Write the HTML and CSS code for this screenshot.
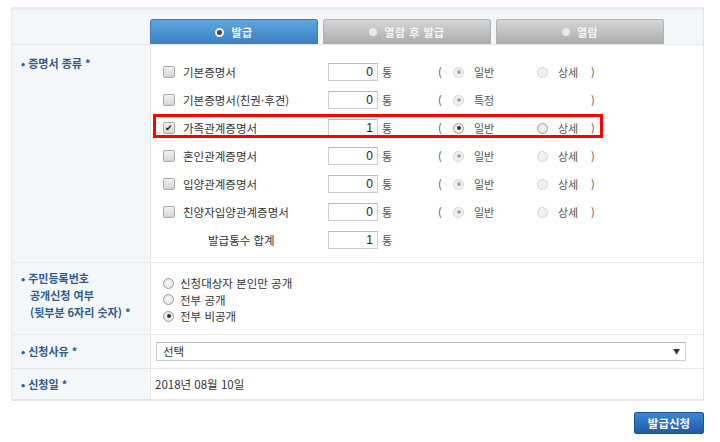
FILE: index.html
```html
<!DOCTYPE html>
<html lang="ko">
<head>
  <meta charset="UTF-8">
  <title>증명서 발급신청</title>
  <link rel="stylesheet" href="styles.css">
</head>
<body>
  <div class="form-box">
    <div class="tab-row">
      <div class="tab active"><span class="tab-dot"></span>발급</div>
      <div class="tab"><span class="tab-dot"></span>열람 후 발급</div>
      <div class="tab"><span class="tab-dot"></span>열람</div>
    </div>

    <!-- 증명서 종류 -->
    <div class="row row-certs">
      <div class="label top">• 증명서 종류 *</div>
      <div class="content certs">
        <div class="cert">
          <div class="cert-name"><span class="check"></span>기본증명서</div>
          <span class="count">0</span><span class="unit">통</span>
          <span class="paren">(</span>
          <span class="opt o1"><span class="radio dis on"></span>일반</span>
          <span class="opt o2"><span class="radio dis"></span>상세</span>
          <span class="paren">)</span>
        </div>
        <div class="cert">
          <div class="cert-name"><span class="check"></span>기본증명서(친권·후견)</div>
          <span class="count">0</span><span class="unit">통</span>
          <span class="paren">(</span>
          <span class="opt o1"><span class="radio dis on"></span>특정</span>
          <span class="opt o2"></span>
          <span class="paren">)</span>
        </div>
        <div class="cert picked">
          <div class="cert-name"><span class="check on">&#10004;</span>가족관계증명서</div>
          <span class="count">1</span><span class="unit">통</span>
          <span class="paren">(</span>
          <span class="opt o1"><span class="radio on"></span>일반</span>
          <span class="opt o2"><span class="radio"></span>상세</span>
          <span class="paren">)</span>
        </div>
        <div class="cert">
          <div class="cert-name"><span class="check"></span>혼인관계증명서</div>
          <span class="count">0</span><span class="unit">통</span>
          <span class="paren">(</span>
          <span class="opt o1"><span class="radio dis on"></span>일반</span>
          <span class="opt o2"><span class="radio dis"></span>상세</span>
          <span class="paren">)</span>
        </div>
        <div class="cert">
          <div class="cert-name"><span class="check"></span>입양관계증명서</div>
          <span class="count">0</span><span class="unit">통</span>
          <span class="paren">(</span>
          <span class="opt o1"><span class="radio dis on"></span>일반</span>
          <span class="opt o2"><span class="radio dis"></span>상세</span>
          <span class="paren">)</span>
        </div>
        <div class="cert">
          <div class="cert-name"><span class="check"></span>친양자입양관계증명서</div>
          <span class="count">0</span><span class="unit">통</span>
          <span class="paren">(</span>
          <span class="opt o1"><span class="radio dis on"></span>일반</span>
          <span class="opt o2"><span class="radio dis"></span>상세</span>
          <span class="paren">)</span>
        </div>
        <div class="cert">
          <div class="cert-name total">발급통수 합계</div>
          <span class="count">1</span><span class="unit">통</span>
        </div>
      </div>
    </div>

    <!-- 주민등록번호 공개 -->
    <div class="row row-rrn">
      <div class="label multi">• 주민등록번호<br>공개신청 여부<br>(뒷부분 6자리 숫자) *</div>
      <div class="content rrn">
        <div class="rrn-opt"><span class="radio"></span>신청대상자 본인만 공개</div>
        <div class="rrn-opt"><span class="radio"></span>전부 공개</div>
        <div class="rrn-opt"><span class="radio on"></span>전부 비공개</div>
      </div>
    </div>

    <!-- 신청사유 -->
    <div class="row row-reason">
      <div class="label">• 신청사유 *</div>
      <div class="content reason">
        <div class="select">선택<span class="arrow">▼</span></div>
      </div>
    </div>

    <!-- 신청일 -->
    <div class="row row-date">
      <div class="label">• 신청일 *</div>
      <div class="content date">2018년 08월 10일</div>
    </div>
  </div>

  <div class="actions">
    <button class="submit-btn">발급신청</button>
  </div>
</body>
</html>
```

FILE: styles.css
```css
body {
  margin: 0;
  background: #fff;
  font-family: "Noto Sans CJK KR", "Noto Sans", sans-serif;
  font-size: 11px;
  color: #333;
}

.form-box {
  margin: 7px 0 0 11px;
  width: 691px;
  border-top: 3px solid #eaeef2;
  border-left: 1px solid #e6e9ec;
  border-right: 1px solid #e3e3e3;
  border-bottom: 2px solid #e6e6e6;
}

/* Onglets */
.tab-row {
  display: flex;
  align-items: flex-end;
  gap: 5px;
  height: 34px;
  padding-left: 138px;
  background: #f4f7fa;
  border-bottom: 1px solid #e3e7eb;
}
.tab {
  width: 166px;
  height: 24px;
  display: flex;
  align-items: center;
  justify-content: center;
  border: 1px solid #b3b3b3;
  border-bottom: none;
  border-radius: 3px 3px 0 0;
  background: linear-gradient(#d6d6d6, #ababab);
  color: #f4f4f4;
  font-weight: bold;
  letter-spacing: 0.5px;
}
.tab.active {
  background: linear-gradient(#5ea7df, #3b80c1);
  border-color: #3c7cbb;
  color: #fff;
}
.tab-dot {
  width: 8px;
  height: 8px;
  border-radius: 50%;
  background: #e9e9e9;
  margin-right: 7px;
}
.tab.active .tab-dot {
  width: 5px;
  height: 5px;
  background: #444;
  border: 2px solid #f2f2f2;
}

/* Lignes */
.row {
  display: flex;
  border-bottom: 1px solid #e6e8ea;
}
.row:last-child {
  border-bottom: none;
}
.label {
  width: 129px;
  padding-left: 9px;
  background: #f4f7fa;
  border-right: 1px solid #e6e8ea;
  color: #2f5b8c;
  font-weight: bold;
  display: flex;
  align-items: center;
}
.label.top {
  align-items: flex-start;
  padding-top: 10px;
}
.label.multi {
  line-height: 17px;
  padding-left: 18px;
  width: 120px;
  text-indent: -9px;
  display: block;
  padding-top: 7px;
}
.content {
  flex: 1;
}

/* Certificats */
.certs {
  padding: 13px 0 8px 12px;
}
.cert {
  position: relative;
  display: flex;
  align-items: center;
  height: 28px;
}
.cert.picked::after {
  content: "";
  position: absolute;
  left: -10px;
  top: 0;
  width: 444px;
  height: 18px;
  border: 3px solid #f00;
}
.cert-name {
  width: 165px;
  display: flex;
  align-items: center;
  font-size: 11.5px;
  color: #333;
}
.cert-name.total {
  padding-left: 45px;
  width: 120px;
}
.check {
  width: 10px;
  height: 10px;
  border: 1px solid #a9a9a9;
  border-radius: 2px;
  background: linear-gradient(#f2f2f2, #d4d4d4);
  margin-right: 8px;
  font-size: 9px;
  line-height: 10px;
  text-align: center;
  color: #222;
}
.count {
  width: 44px;
  height: 16px;
  line-height: 16px;
  padding-right: 4px;
  border: 1px solid #cfcfcf;
  border-top-color: #b9b9b9;
  text-align: right;
  font-size: 12px;
  font-family: "Liberation Sans", sans-serif;
  color: #222;
  background: #fff;
}
.unit {
  width: 56px;
  padding-left: 4px;
  color: #555;
}
.paren {
  width: 15px;
  color: #555;
}
.opt {
  display: flex;
  align-items: center;
  color: #555;
}
.opt.o1 {
  width: 84px;
}
.opt.o2 {
  width: 54px;
}
.opt .radio {
  margin-right: 10px;
}
.radio {
  box-sizing: border-box;
  width: 11px;
  height: 11px;
  border-radius: 50%;
  border: 1px solid #9e9e9e;
  background: radial-gradient(#fdfdfd, #dcdcdc);
  position: relative;
  flex-shrink: 0;
}
.radio.on::after {
  content: "";
  position: absolute;
  left: 2.5px;
  top: 2.5px;
  width: 4px;
  height: 4px;
  border-radius: 50%;
  background: #333;
}
.radio.dis {
  border-color: #d4d4d4;
  background: #f1f1f1;
}
.radio.dis.on::after {
  background: #a8a8a8;
}

/* Numéro de résident */
.rrn {
  padding: 12px 0 9px 12px;
}
.rrn-opt {
  display: flex;
  align-items: center;
  height: 16.5px;
  font-size: 11.5px;
}
.rrn-opt .radio {
  margin-right: 6px;
}

/* Motif */
.row-reason {
  height: 33px;
}
.reason {
  display: flex;
  align-items: center;
  padding-left: 5px;
}
.select {
  width: 522px;
  height: 17px;
  line-height: 17px;
  padding-left: 6px;
  border: 1px solid #cdcdcd;
  border-top-color: #bbb;
  position: relative;
  font-size: 11.5px;
  color: #333;
}
.arrow {
  position: absolute;
  right: 5px;
  top: 0;
  font-size: 7px;
  color: #333;
}

/* Date */
.row-date {
  height: 30px;
}
.date {
  display: flex;
  align-items: center;
  padding-left: 4px;
  font-size: 11.5px;
}

/* Bouton */
.actions {
  display: flex;
  justify-content: flex-end;
  padding: 11px 16px 0 0;
}
.submit-btn {
  width: 70px;
  height: 22px;
  border: 1px solid #1e5196;
  border-radius: 2px;
  background: linear-gradient(#3f86d6, #1f5aa7);
  color: #fff;
  font-family: "Noto Sans CJK KR", sans-serif;
  font-weight: bold;
  font-size: 11.5px;
  cursor: pointer;
}
```
